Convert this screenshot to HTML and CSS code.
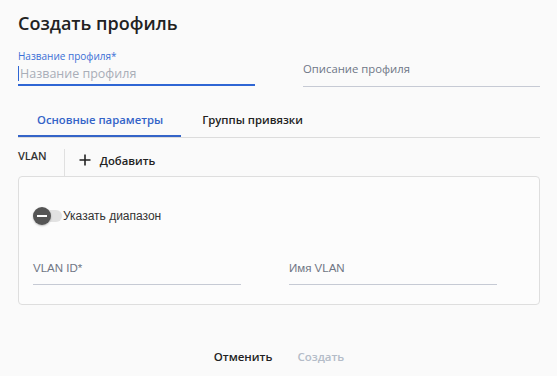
FILE: index.html
```html
<!DOCTYPE html>
<html lang="ru">
<head>
<meta charset="utf-8">
<link rel="stylesheet" href="styles.css">
</head>
<body>
<div class="dialog">
  <h1 class="title">Создать профиль</h1>
  <div class="fields">
    <div class="field active">
      <label class="flabel">Название профиля*</label>
      <div class="finput"><span class="caret"></span><span class="ph">Название профиля</span></div>
    </div>
    <div class="field">
      <div class="finput plain"><span class="ph2">Описание профиля</span></div>
    </div>
  </div>
  <div class="tabs">
    <div class="tab selected">Основные параметры</div>
    <div class="tab">Группы привязки</div>
  </div>
  <div class="vlanbar">
    <span class="vlan">VLAN</span>
    <span class="divider"></span>
    <button class="add"><svg width="12" height="12" viewBox="0 0 12 12"><path d="M6 0.5v11M0.5 6h11" stroke="#222" stroke-width="1.6"/></svg><span>Добавить</span></button>
  </div>
  <div class="card">
    <div class="toggle">
      <span class="track"><span class="knob"></span></span>
      <span class="tlabel">Указать диапазон</span>
    </div>
    <div class="row">
      <div class="sfield"><span>VLAN ID*</span></div>
      <div class="sfield"><span>Имя VLAN</span></div>
    </div>
  </div>
  <div class="actions">
    <button class="btn cancel">Отменить</button>
    <button class="btn create">Создать</button>
  </div>
</div>
</body>
</html>
```
FILE: styles.css
```css
* { box-sizing: border-box; }
html, body { margin: 0; padding: 0; background: #fafafa; }
body { font-family: "Open Sans", "Noto Sans", sans-serif; color: #222; width: 557px; height: 376px; overflow: hidden; }
.dialog { padding: 11px 17px 0 18px; }
.title { margin: 0; font-size: 18px; font-weight: 600; color: #222; line-height: 24px; }
.fields { display: grid; grid-template-columns: 237px 237px; column-gap: 48px; margin-top: 15px; }
.field { height: 37px; position: relative; }
.flabel { display: block; font-size: 10px; color: #3b6fd6; line-height: 13px; }
.finput { display: flex; align-items: center; height: 22px; border-bottom: 1px solid #c6cad4; }
.field.active .finput { border-bottom: 2px solid #2f66d4; height: 23px; }
.finput.plain { height: 37px; padding-top: 0; }
.caret { width: 1px; height: 15px; background: #2f66d4; margin-right: 1px; }
.ph { font-size: 12.5px; color: #a9aeb8; }
.ph2 { font-size: 11.3px; color: #6e7686; }
.tabs { display: flex; margin-top: 14px; border-bottom: 1px solid #dcdcdc; }
.tab { font-size: 11.3px; font-weight: 600; height: 36px; display: flex; align-items: center; padding: 0 19px; color: #222; }
.tab.selected { color: #3464c8; border-bottom: 2px solid #3464c8; margin-bottom: -1px; padding-top: 2px; padding-right: 18px; margin-right: 2px; }
.vlanbar { display: flex; align-items: center; height: 38px; }
.vlan { font-size: 11px; font-weight: 600; color: #333; margin-top: -4px; }
.divider { width: 1px; height: 27px; background: #e0e0e0; margin: 0 14px 0 17px; align-self: flex-start; margin-top: 11px; }
.add { display: flex; align-items: center; gap: 9px; border: 0; background: none; padding: 0; font: 600 11.3px "Open Sans", sans-serif; color: #222; margin-top: 6px; }
.card { width: 522px; height: 129px; border: 1px solid #dedede; border-radius: 4px; background: #fcfcfc; padding: 0 14px; }
.toggle { display: flex; align-items: center; margin-top: 29px; height: 20px; }
.track { position: relative; width: 26px; height: 12px; border-radius: 6px; background: #e2e2e2; margin-left: 3px; }
.knob { position: absolute; left: -3px; top: -3px; width: 18px; height: 18px; border-radius: 50%; background: #555; box-shadow: 0 1px 2px rgba(0,0,0,.25); }
.knob::after { content: ""; position: absolute; left: 4px; right: 4px; top: 8px; height: 2px; background: #fff; }
.tlabel { font-family: "Liberation Sans", Arial, sans-serif; font-size: 12px; color: #333; margin-left: 1px; }
.row { display: grid; grid-template-columns: 208px 208px; column-gap: 48px; margin-top: 22px; }
.sfield { height: 37px; border-bottom: 1px solid #c6cad4; display: flex; align-items: center; padding-top: 4px; }
.sfield span { font-family: "Liberation Sans", Arial, sans-serif; font-size: 11.5px; color: #707684; }
.actions { display: flex; justify-content: center; gap: 25px; margin-top: 44px; padding-right: 0; }
.btn { border: 0; background: none; padding: 0; font: 600 11.5px "Open Sans", sans-serif; }
.cancel { color: #222; }
.create { color: #b4bcc8; }
```
